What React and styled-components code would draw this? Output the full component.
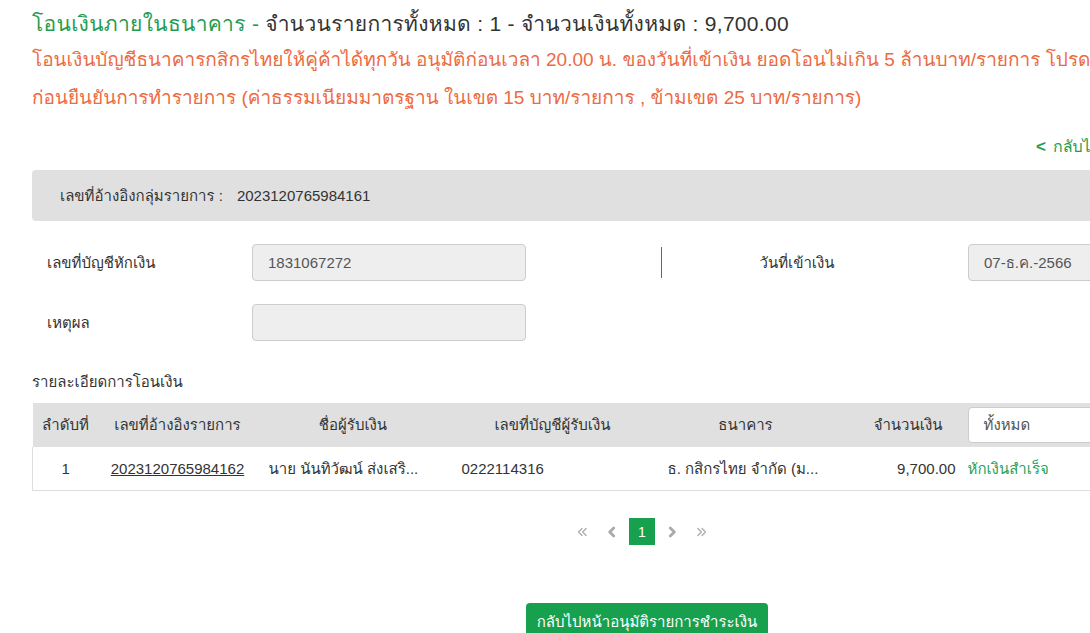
import React from 'react'
import styled, { createGlobalStyle } from 'styled-components'

const GlobalStyle = createGlobalStyle`
  html, body {
    margin: 0;
    padding: 0;
    overflow: hidden;
    background: #fff;
  }
  body {
    font-family: "Liberation Sans", Arial, Tahoma, Loma, "Noto Sans", sans-serif;
    color: #333;
  }
`

const Page = styled.div`
  box-sizing: border-box;
  width: 1252px;
  padding: 10px 0 0 32px;
`

const Title = styled.h3`
  margin: 0;
  font-size: 21px;
  font-weight: normal;
  line-height: 28px;
  letter-spacing: 0.3px;
  color: #333;
`

const TitleGreen = styled.span`
  color: #1f9d4f;
`

const Notice = styled.p`
  margin: 3px 0 0;
  font-size: 19px;
  line-height: 38px;
  color: #ec6b42;
  white-space: nowrap;
`

const BackRow = styled.div`
  width: 1160px;
  display: flex;
  justify-content: flex-end;
  margin-top: 18px;
  height: 24px;
  font-size: 16px;
  line-height: 24px;
`

const BackLink = styled.a`
  color: #1f9d4f;
  text-decoration: none;
  white-space: nowrap;
  b {
    font-weight: bold;
    font-size: 17px;
    margin-right: 7px;
  }
`

const RefPanel = styled.div`
  margin-top: 11px;
  height: 51px;
  display: flex;
  align-items: center;
  padding-left: 28px;
  background: #e0e0e0;
  border-radius: 4px;
  font-size: 15px;
  color: #333;
  gap: 14px;
`

const Form = styled.div`
  display: flex;
  flex-direction: column;
  gap: 23px;
  margin-top: 23px;
`

const FormRow = styled.div`
  display: flex;
  align-items: center;
  height: 37px;
`

const Label = styled.div`
  box-sizing: border-box;
  width: 220px;
  padding-left: 15px;
  font-size: 15px;
  color: #333;
`

const Field = styled.div`
  box-sizing: border-box;
  width: ${(p) => p.$w || 274}px;
  height: 37px;
  padding: 0 15px;
  display: flex;
  align-items: center;
  background: #eee;
  border: 1px solid #ccc;
  border-radius: 4px;
  font-size: 15px;
  color: #555;
`

const Divider = styled.div`
  width: 1px;
  height: 31px;
  margin-left: 135px;
  background: #666;
`

const DateLabel = styled.div`
  width: 270px;
  text-align: center;
  font-size: 15px;
  margin-right: 36px;
`

const SectionTitle = styled.div`
  margin-top: 31px;
  font-size: 15px;
  line-height: 20px;
`

const Table = styled.table`
  margin-top: 11px;
  width: 1090px;
  border-collapse: collapse;
  table-layout: fixed;
  font-size: 15px;
`

const Th = styled.th`
  height: 44px;
  padding: 0 ${(p) => (p.$align === 'right' ? '25px' : '4px')} 0 ${(p) => p.$pl ?? 4}px;
  background: #e0e0e0;
  font-weight: normal;
  color: #333;
  text-align: ${(p) => p.$align || 'center'};
  white-space: nowrap;
`

const Td = styled.td`
  height: 43px;
  padding: 0 ${(p) => (p.$align === 'right' ? '12px' : '4px')} 0
    ${(p) => p.$pl ?? (p.$align === 'left' ? 12 : 4)}px;
  text-align: ${(p) => p.$align || 'center'};
  border-bottom: 1px solid #ddd;
  white-space: nowrap;
  overflow: hidden;
  color: #333;
  &:first-child {
    border-left: 1px solid #ddd;
  }
`

const RefLink = styled.a`
  color: #333;
  text-decoration: underline;
`

const Status = styled.span`
  color: #27a259;
`

const Select = styled.div`
  box-sizing: border-box;
  height: 36px;
  display: flex;
  align-items: center;
  padding-left: 15px;
  background: #fff;
  border: 1px solid #ccc;
  border-radius: 4px;
  font-size: 15px;
  color: #555;
`

const Pager = styled.ul`
  list-style: none;
  margin: 27px 0 0;
  padding: 0;
  display: flex;
  justify-content: center;
  align-items: center;
  gap: 4px;
`

const PageItem = styled.li`
  box-sizing: border-box;
  min-width: 26px;
  height: 27px;
  display: flex;
  align-items: center;
  justify-content: center;
  font-size: 14px;
  color: ${(p) => (p.$active ? '#fff' : '#aaa')};
  background: ${(p) => (p.$active ? '#17a04e' : 'transparent')};
`

const ButtonRow = styled.div`
  display: flex;
  justify-content: center;
  margin-top: 58px;
`

const Button = styled.button`
  height: 38px;
  padding: 0 11px;
  border: none;
  border-radius: 4px;
  background: #17a04e;
  color: #fff;
  font-family: inherit;
  font-size: 15px;
  margin-left: 10px;
`

const Icon = ({ d, w = 2 }) => (
  <svg width="14" height="14" viewBox="0 0 12 12" fill="none" stroke="currentColor" strokeWidth={w} strokeLinecap="round" strokeLinejoin="round">
    <path d={d} />
  </svg>
)

export default function App() {
  return (
    <>
      <GlobalStyle />
      <Page>
        <Title>
          <TitleGreen>โอนเงินภายในธนาคาร - </TitleGreen>
          จำนวนรายการทั้งหมด : 1 - จำนวนเงินทั้งหมด : 9,700.00
        </Title>
        <Notice>
          โอนเงินบัญชีธนาคารกสิกรไทยให้คู่ค้าได้ทุกวัน อนุมัติก่อนเวลา 20.00 น. ของวันที่เข้าเงิน ยอดโอนไม่เกิน 5 ล้านบาท/รายการ โปรดตรวจสอบข้อมูล
          <br />
          ก่อนยืนยันการทำรายการ (ค่าธรรมเนียมมาตรฐาน ในเขต 15 บาท/รายการ , ข้ามเขต 25 บาท/รายการ)
        </Notice>

        <BackRow>
          <BackLink href="#"><b>&lt;</b>กลับไปหน้าก่อนหน้า</BackLink>
        </BackRow>

        <RefPanel>
          <span>เลขที่อ้างอิงกลุ่มรายการ :</span>
          <span>2023120765984161</span>
        </RefPanel>

        <Form>
          <FormRow>
            <Label>เลขที่บัญชีหักเงิน</Label>
            <Field>1831067272</Field>
            <Divider />
            <DateLabel>วันที่เข้าเงิน</DateLabel>
            <Field $w={200}>07-ธ.ค.-2566</Field>
          </FormRow>
          <FormRow>
            <Label>เหตุผล</Label>
            <Field />
          </FormRow>
        </Form>

        <SectionTitle>รายละเอียดการโอนเงิน</SectionTitle>

        <Table>
          <colgroup>
            <col style={{ width: 66 }} />
            <col style={{ width: 158 }} />
            <col style={{ width: 193 }} />
            <col style={{ width: 206 }} />
            <col style={{ width: 180 }} />
            <col style={{ width: 132 }} />
            <col />
          </colgroup>
          <thead>
            <tr>
              <Th>ลำดับที่</Th>
              <Th>เลขที่อ้างอิงรายการ</Th>
              <Th>ชื่อผู้รับเงิน</Th>
              <Th>เลขที่บัญชีผู้รับเงิน</Th>
              <Th>ธนาคาร</Th>
              <Th $align="right">จำนวนเงิน</Th>
              <Th $align="left" $pl={0}><Select>ทั้งหมด</Select></Th>
            </tr>
          </thead>
          <tbody>
            <tr>
              <Td>1</Td>
              <Td><RefLink href="#">2023120765984162</RefLink></Td>
              <Td $align="left">นาย นันทิวัฒน์ ส่งเสริ...</Td>
              <Td $align="left">0222114316</Td>
              <Td $align="left">ธ. กสิกรไทย จำกัด (ม...</Td>
              <Td $align="right">9,700.00</Td>
              <Td $align="left" $pl={0}><Status>หักเงินสำเร็จ</Status></Td>
            </tr>
          </tbody>
        </Table>

        <Pager>
          <PageItem><Icon w={1.1} d="M6 3 3 6l3 3M9.5 3l-3 3 3 3" /></PageItem>
          <PageItem><Icon w={2.4} d="M7.5 2.5 4 6l3.5 3.5" /></PageItem>
          <PageItem $active>1</PageItem>
          <PageItem><Icon w={2.4} d="M4.5 2.5 8 6l-3.5 3.5" /></PageItem>
          <PageItem><Icon w={1.1} d="M2.5 3l3 3-3 3M6 3l3 3-3 3" /></PageItem>
        </Pager>

        <ButtonRow>
          <Button>กลับไปหน้าอนุมัติรายการชำระเงิน</Button>
        </ButtonRow>
      </Page>
    </>
  )
}
